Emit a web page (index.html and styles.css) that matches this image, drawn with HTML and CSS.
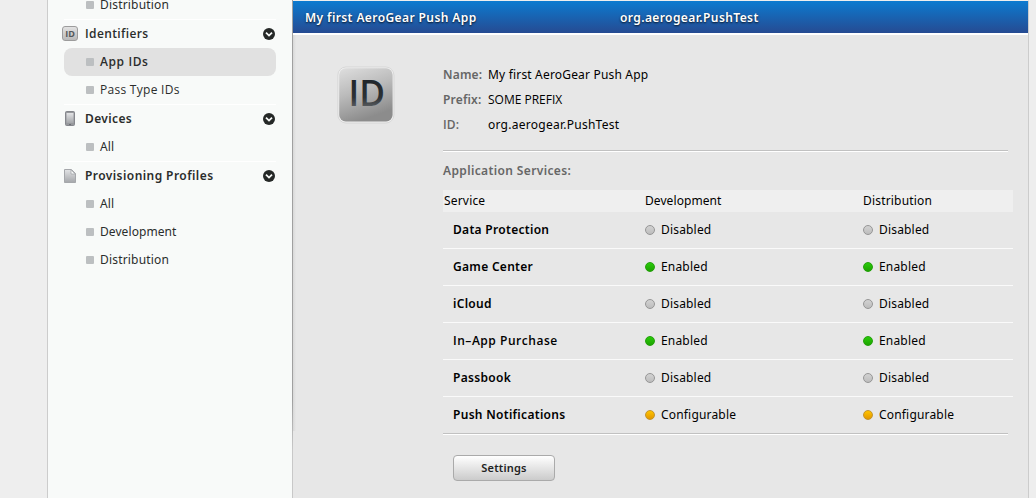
FILE: index.html
```html
<!DOCTYPE html>
<html lang="en">
<head>
<meta charset="utf-8">
<title>App IDs</title>
<link rel="stylesheet" href="styles.css">
</head>
<body>
<svg class="defs" aria-hidden="true">
  <defs>
    <linearGradient id="metal" x1="0" y1="0" x2="0" y2="1"><stop offset="0" stop-color="#e3e4e6"/><stop offset="1" stop-color="#a4a6aa"/></linearGradient>
    <symbol id="chevron" viewBox="0 0 12 12">
      <circle cx="6" cy="6" r="6" fill="#252827"/>
      <path d="M3 4.7 6 7.6 9 4.7" fill="none" stroke="#f8faf9" stroke-width="1.8"/>
    </symbol>
  </defs>
</svg>
<div class="page">
  <nav class="sidebar">
    <ul class="links links-first">
      <li class="link">Distribution</li>
    </ul>
    <section class="group">
      <h2 class="heading">
        <span class="icon raised"><span class="id-badge">ID</span></span>
        <span class="label plain ls-ident">Identifiers</span>
        <svg class="toggle"><use href="#chevron"/></svg>
      </h2>
      <ul class="links">
        <li class="link selected plain">App IDs</li>
        <li class="link plain ls-pass">Pass Type IDs</li>
      </ul>
    </section>
    <section class="group">
      <h2 class="heading">
        <span class="icon raised"><svg width="10" height="15" viewBox="0 0 10 15"><rect x=".5" y=".5" width="9" height="14" rx="1" fill="#96989c" stroke="#85878d"/><rect x="1.5" y="2" width="7" height="10" fill="url(#metal)"/><rect x="4" y="13" width="2" height="1" fill="#6c6e73"/></svg></span>
        <span class="label">Devices</span>
        <svg class="toggle"><use href="#chevron"/></svg>
      </h2>
      <ul class="links">
        <li class="link">All</li>
      </ul>
    </section>
    <section class="group">
      <h2 class="heading">
        <span class="icon"><svg width="12" height="14" viewBox="0 0 12 14"><path d="M.5.5H7.5L11.5 4.5V13.5H.5Z" fill="url(#metal)" stroke="#a5a7ab"/><path d="M7 .8V5H11.2Z" fill="#f7f8f8" stroke="#a5a7ab" stroke-width=".8"/></svg></span>
        <span class="label ls-prov">Provisioning Profiles</span>
        <svg class="toggle"><use href="#chevron"/></svg>
      </h2>
      <ul class="links">
        <li class="link">All</li>
        <li class="link ls-dev">Development</li>
        <li class="link">Distribution</li>
      </ul>
    </section>
  </nav>
  <div class="edge"></div>
  <main class="main">
    <header class="bar">
      <span class="bar-name">My first AeroGear Push App</span>
      <span>org.aerogear.PushTest</span>
    </header>
    <div class="detail">
      <div class="app-icon"><svg width="58" height="58" viewBox="0 0 58 58">
        <defs>
          <linearGradient id="tile" x1="0" y1="0" x2=".35" y2="1"><stop offset="0" stop-color="#dedede"/><stop offset=".5" stop-color="#bababa"/><stop offset="1" stop-color="#8c8c8c"/></linearGradient>
          <linearGradient id="ink" x1="0" y1="0" x2="0" y2="1"><stop offset=".25" stop-color="#20262b"/><stop offset=".6" stop-color="#2c3135"/><stop offset=".85" stop-color="#65686b"/></linearGradient>
        </defs>
        <rect x=".9" y="1" width="56" height="56" rx="8" fill="#f0f0f0" stroke="#d2d2d2" stroke-width=".8"/>
        <rect x="2.2" y="2.3" width="53.4" height="53.2" rx="6.5" fill="url(#tile)"/>
        <text class="app-icon-text" x="11.6" y="40" textLength="36.5" lengthAdjust="spacingAndGlyphs" fill="url(#ink)">ID</text>
      </svg></div>
      <div class="content">
        <dl class="facts">
          <dt>Name:</dt><dd>My first AeroGear Push App</dd>
          <dt>Prefix:</dt><dd class="plain ls-caps">SOME PREFIX</dd>
          <dt class="plain">ID:</dt><dd class="ls-id">org.aerogear.PushTest</dd>
        </dl>
        <div class="rule"></div>
        <h3 class="subhead">Application Services:</h3>
        <div class="table">
          <div class="row head"><span>Service</span><span class="ls-dev">Development</span><span>Distribution</span></div>
          <div class="row"><b>Data Protection</b><span class="state off">Disabled</span><span class="state off">Disabled</span></div>
          <div class="row"><b>Game Center</b><span class="state on">Enabled</span><span class="state on">Enabled</span></div>
          <div class="row"><b>iCloud</b><span class="state off">Disabled</span><span class="state off">Disabled</span></div>
          <div class="row"><b class="plain ls-inapp">In–App Purchase</b><span class="state on">Enabled</span><span class="state on">Enabled</span></div>
          <div class="row"><b>Passbook</b><span class="state off">Disabled</span><span class="state off">Disabled</span></div>
          <div class="row last"><b>Push Notifications</b><span class="state config">Configurable</span><span class="state config">Configurable</span></div>
        </div>
        <div class="rule"></div>
        <button class="settings" type="button">Settings</button>
      </div>
    </div>
  </main>
</div>
</body>
</html>
```
FILE: styles.css
```css
*, *::before { box-sizing: border-box; }
body {
  margin: 0;
  height: 498px;
  overflow: hidden;
  background: #eee;
  color: #000;
  font: 12px/16px "Noto Sans", "Open Sans", sans-serif;
  letter-spacing: 0.18px;
}
.defs { position: absolute; width: 0; height: 0; }
ul, dl, dd, h2, h3 { margin: 0; padding: 0; list-style: none; font-size: 12px; }
.page {
  display: flex;
  width: 982px;
  height: 498px;
  margin-left: 47px;
}
.plain { font-family: "Open Sans", sans-serif; }

/* Sidebar */
.sidebar {
  width: 245px;
  flex: none;
  padding: 0 16px;
  overflow: hidden;
  background: #f8faf9;
  border-left: 1px solid #ccc;
  color: #2b2d2c;
}
.edge {
  width: 1px;
  background: linear-gradient(#a0a0a0 400px, #c8c8c8 450px);
}
.links-first { margin-top: -9px; }
.group { border-top: 1px solid #fff; }
.heading {
  display: flex;
  align-items: center;
  height: 28px;
  font-weight: 600;
  letter-spacing: 0.38px;
}
.icon { display: flex; justify-content: center; width: 12px; margin-right: 9px; }
.raised { padding-bottom: 1px; }
.label { flex: 1; }
.toggle { width: 12px; height: 12px; margin-right: 1px; }
.id-badge {
  flex: none;
  width: 16px;
  height: 15px;
  border: 1px solid #9c9c9c;
  border-radius: 3px;
  background: linear-gradient(#e2e2e2, #b9b9b9);
  color: #55585a;
  font: bold 9px/13px "Open Sans", sans-serif;
  letter-spacing: 0;
  text-align: center;
}
.link {
  display: flex;
  align-items: center;
  height: 28px;
  padding-left: 22px;
}
.link::before {
  content: "";
  width: 8px;
  height: 8px;
  margin-right: 6px;
  border-radius: 1px;
  background: #bcbfc1;
}
.selected {
  border-radius: 8px;
  background: #e1e1e1;
  font-weight: 600;
  letter-spacing: 0.6px;
}

/* Main panel */
.main {
  flex: 1;
  border-top: 1px solid #eee;
  border-right: 1px solid #ccc;
  background: linear-gradient(90deg, #d8d8d8, #e7e7e7) 0 0 / 3px 430px no-repeat #e7e7e7;
}
.bar {
  display: flex;
  align-items: center;
  height: 34px;
  padding: 2px 0 0 12px;
  border-bottom: 2px solid #fff;
  background: linear-gradient(#0c7bd0, #264b92) padding-box;
  color: #fff;
  font-weight: 600;
  letter-spacing: 0.4px;
  text-shadow: 0 1px 2px rgba(0, 0, 0, 0.8);
}
.bar-name { width: 315px; }
.detail { display: flex; padding: 27px 15px 0 44px; }
.app-icon { width: 106px; padding-top: 4px; }
.app-icon-text { font: 600 36px "Open Sans", sans-serif; letter-spacing: 0; }
.content { width: 570px; }
.facts {
  display: grid;
  grid-template-columns: 45px 1fr;
  grid-auto-rows: 25px;
  line-height: 25px;
}
.facts dt { color: #666; font-weight: 600; }
.rule {
  width: 565px;
  height: 2px;
  border-top: 1px solid #c1c1c1;
  border-bottom: 1px solid #fff;
}
.facts + .rule { margin-top: 13px; }
.subhead {
  height: 38px;
  line-height: 38px;
  color: #666;
  font-weight: 600;
  letter-spacing: 0.37px;
}
.row {
  display: grid;
  grid-template-columns: 192px 218px 1fr;
  align-items: center;
  height: 37px;
  padding-left: 10px;
  border-bottom: 1px solid #fafafa;
}
.row b { font-weight: 600; letter-spacing: 0.3px; }
.row.head {
  grid-template-columns: 201px 218px 1fr;
  height: 22px;
  padding-left: 1px;
  border: 0;
  background: #efefef;
}
.row.last { height: 36px; border: 0; }
.state { display: flex; align-items: center; }
.state::before {
  content: "";
  width: 10px;
  height: 10px;
  margin-right: 6px;
  border: 1px solid;
  border-radius: 50%;
}
.off::before { background: linear-gradient(#d2d2d2, #bdbdbd); border-color: #969696; }
.on::before { background: linear-gradient(#2acb0a, #1da300); border-color: #23a00b; }
.config::before { background: linear-gradient(#ffc400, #e29700); border-color: #c2932c; }
.settings {
  display: block;
  width: 102px;
  height: 26px;
  margin: 20px 0 0 10px;
  padding: 0;
  border: 1px solid #aaa;
  border-radius: 4px;
  background: linear-gradient(#fff, #cbcbcb);
  color: #222;
  font: 600 11px/24px "Noto Sans", sans-serif;
  letter-spacing: 0.2px;
}

/* Tracking adjustments */
.ls-ident { letter-spacing: 0.38px; }
.ls-pass { letter-spacing: 0.28px; }
.ls-dev { letter-spacing: 0.08px; }
.ls-prov { letter-spacing: 0.43px; }
.ls-caps { letter-spacing: 0; }
.ls-id { letter-spacing: 0.26px; }
.row .ls-inapp { letter-spacing: 0.53px; }
```
